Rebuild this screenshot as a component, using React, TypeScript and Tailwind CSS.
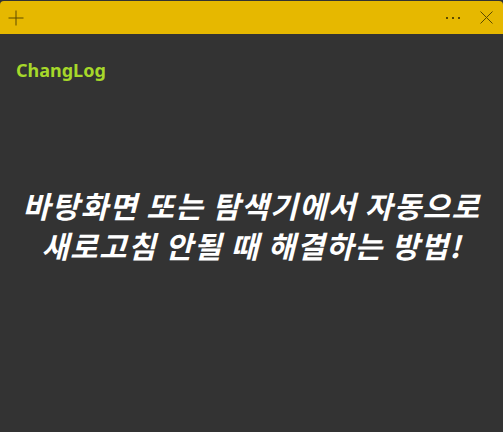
import React from "react";

export default function App() {
  return (
    <div className="w-[503px] h-[432px] bg-[#333333] flex flex-col overflow-hidden">
      <div className="h-[33px] mt-px bg-[#e6b800] rounded-t-[4px] flex items-center justify-between px-[8px] shrink-0">
        <svg width="16" height="16" viewBox="0 0 16 16">
          <path d="M8 0.5V15.5M0.5 8H15.5" stroke="#5c4a00" strokeWidth="1" />
        </svg>
        <div className="flex items-center gap-[19px] mr-[2px]">
          <svg width="15" height="4" viewBox="0 0 15 4">
            <rect x="0" y="1" width="2" height="2" fill="#5c4a00" />
            <rect x="6" y="1" width="2" height="2" fill="#5c4a00" />
            <rect x="12" y="1" width="2" height="2" fill="#5c4a00" />
          </svg>
          <svg width="13" height="13" viewBox="0 0 13 13">
            <path d="M0.5 0.5L12.5 12.5M12.5 0.5L0.5 12.5" stroke="#5c4a00" strokeWidth="1" />
          </svg>
        </div>
      </div>
      <div className="px-[16px] pt-[24px]">
        <div className="text-[18px] font-bold text-[#a6d82a] leading-[25px] [font-family:'Noto_Sans','Noto_Sans_CJK_KR',sans-serif]">
          ChangLog
        </div>
      </div>
      <div className="flex-1 flex items-center justify-center pb-[66px]">
        <div className="text-white text-[30px] tracking-[1.3px] font-bold italic text-center leading-[40px] [font-family:'Noto_Sans_CJK_KR',sans-serif]">
          바탕화면 또는 탐색기에서 자동으로
          <br />
          새로고침 안될 때 해결하는 방법!
        </div>
      </div>
    </div>
  );
}
